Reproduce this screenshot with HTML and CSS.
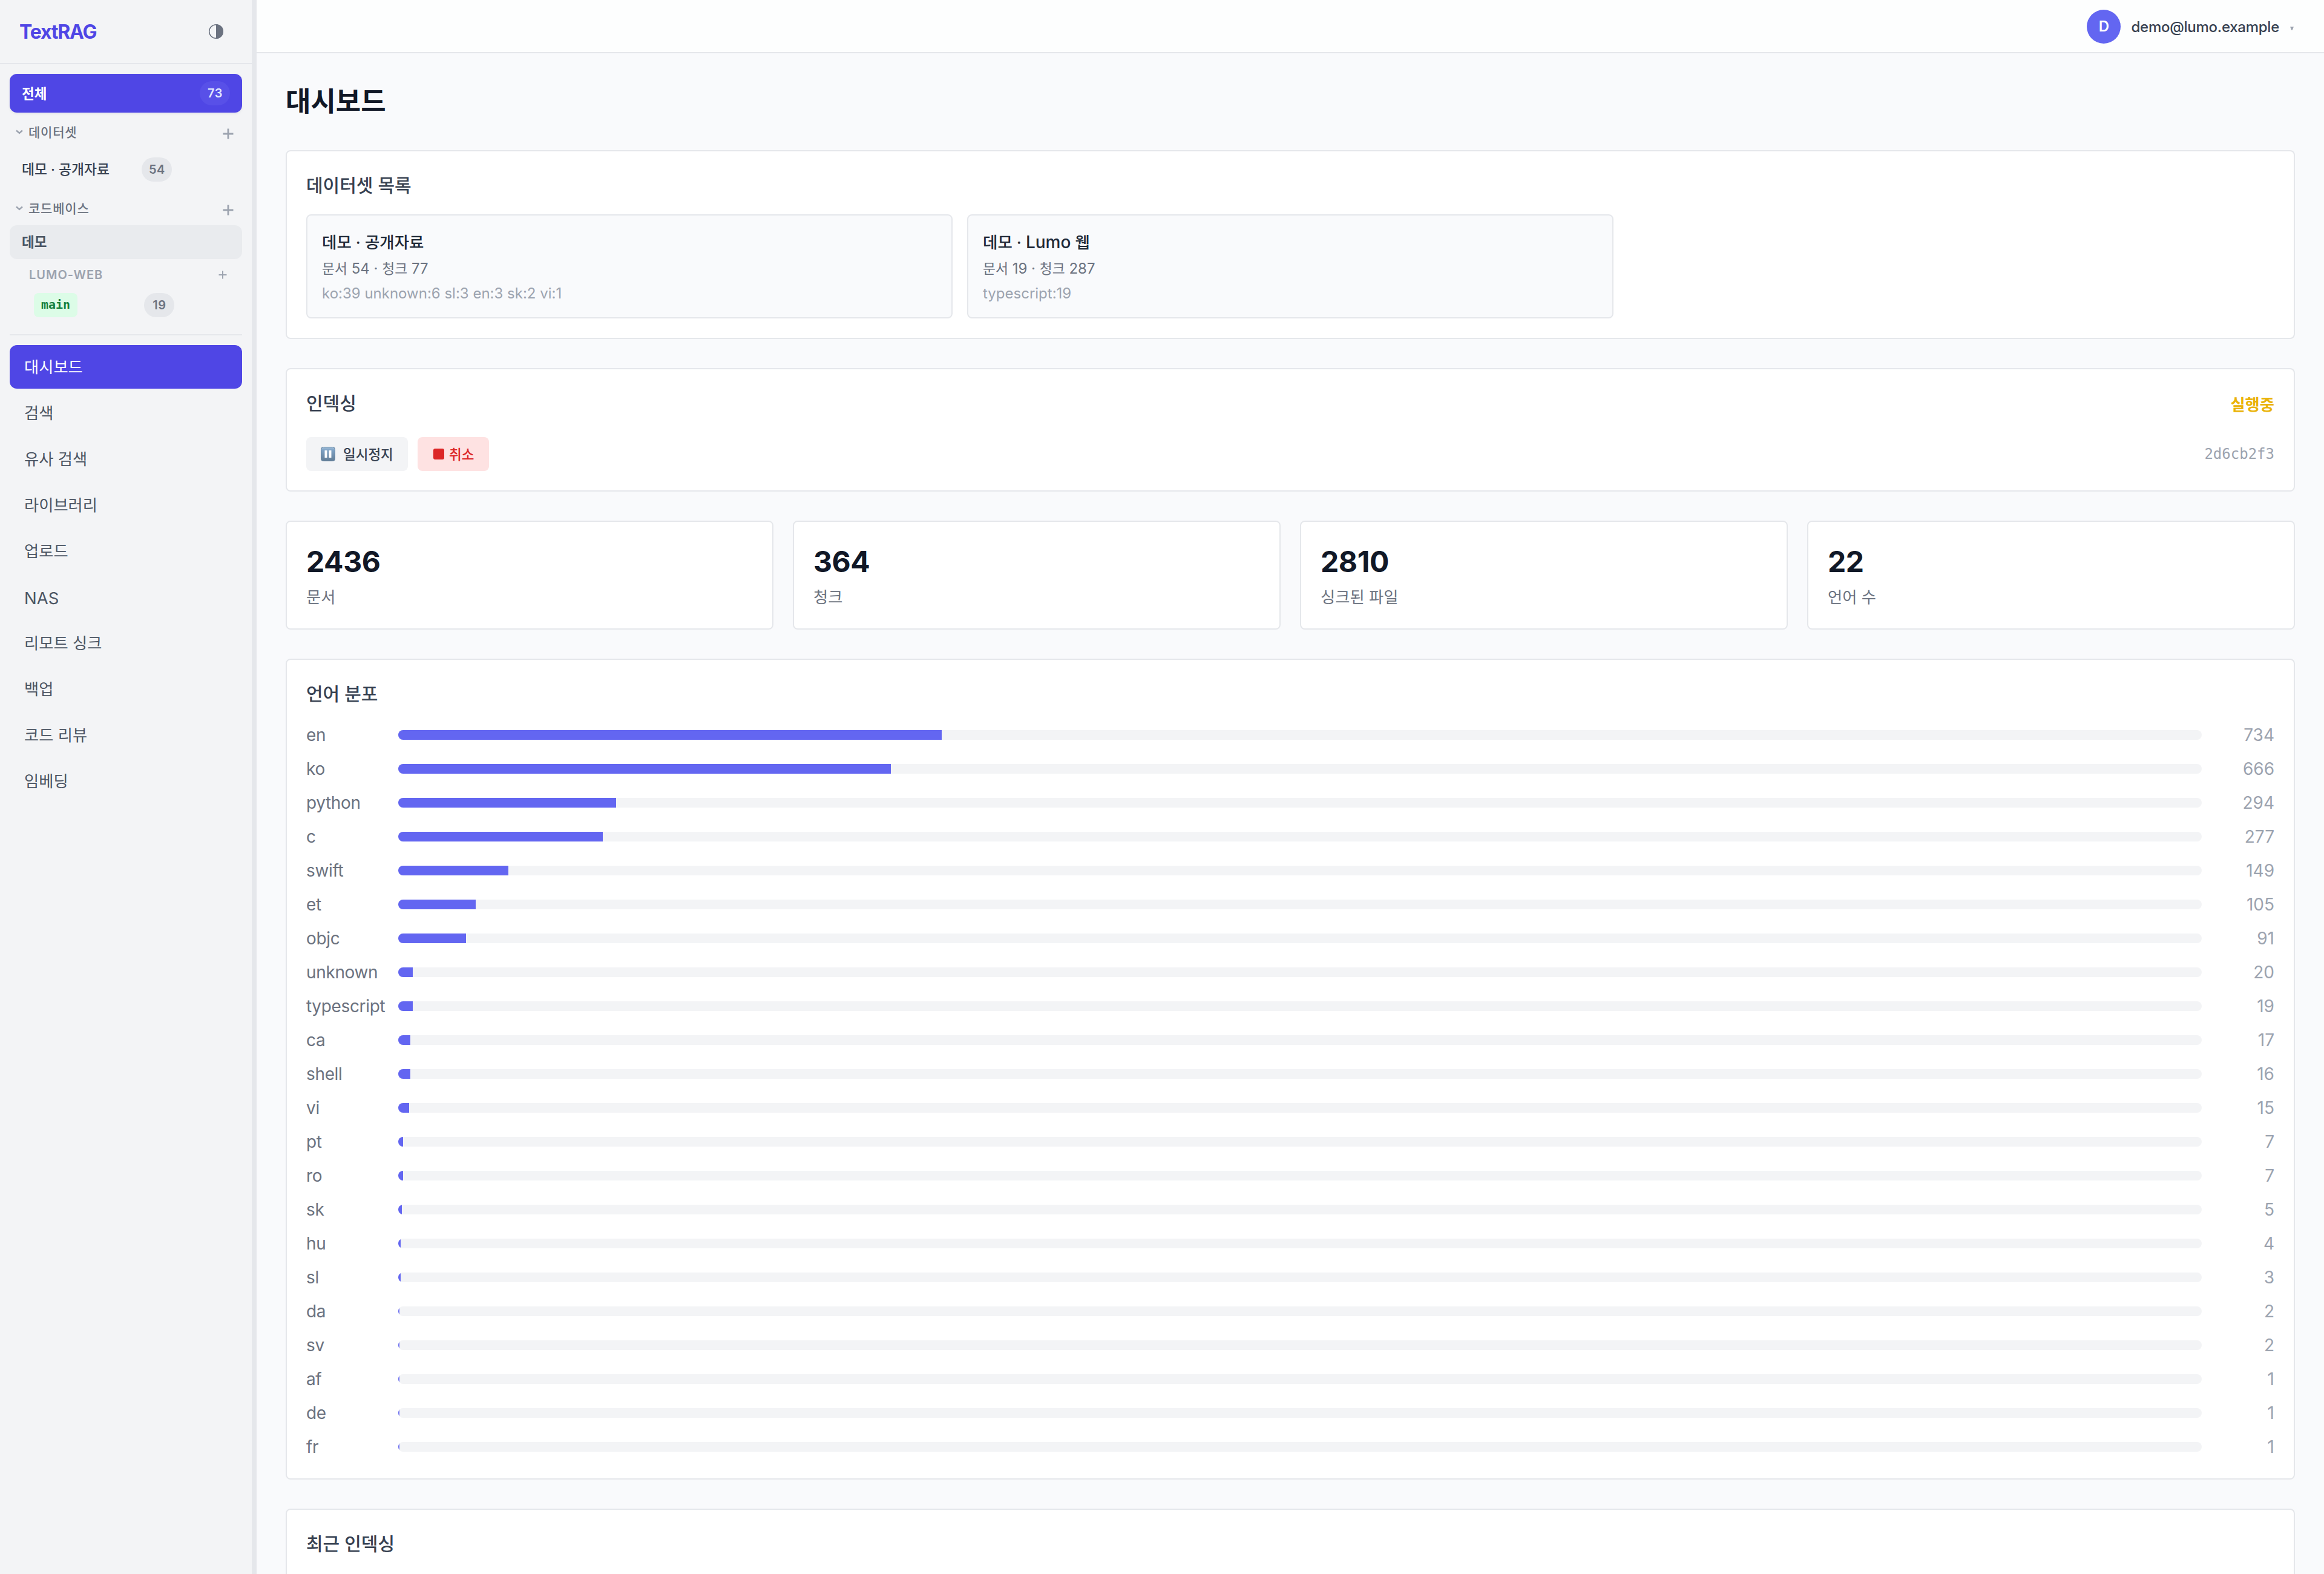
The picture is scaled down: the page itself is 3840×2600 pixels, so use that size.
FILE: index.html
```html
<!DOCTYPE html>
<html lang="ko">
<head>
    <meta charset="UTF-8">
    <meta name="viewport" content="width=device-width, initial-scale=1.0">
    <title>TextRAG</title>
    <link rel="stylesheet" href="styles.css">
</head>
<body>
    <aside class="sidebar">
        <div class="sidebar-header">
            <span class="logo">TextRAG</span>
            <svg class="theme-icon" viewBox="0 0 26 26">
                <circle cx="13" cy="13" r="11.3" fill="none" stroke="currentColor" stroke-width="1.5"/>
                <path d="M13 1a12 12 0 0 1 0 24z" fill="currentColor"/>
            </svg>
        </div>
        <div class="sidebar-body">
            <div class="all-item"><span>전체</span><span class="badge">73</span></div>

            <div class="group-header">
                <svg class="chevron" viewBox="0 0 12 8"><path d="M1 1.5l5 4.5 5-4.5"/></svg>
                <span>데이터셋</span>
                <svg class="plus" viewBox="0 0 18 18"><path d="M9 .5v17M.5 9h17"/></svg>
            </div>
            <div class="dataset-item"><span class="dataset-name">데모 · 공개자료</span><span class="badge">54</span></div>

            <div class="group-header">
                <svg class="chevron" viewBox="0 0 12 8"><path d="M1 1.5l5 4.5 5-4.5"/></svg>
                <span>코드베이스</span>
                <svg class="plus" viewBox="0 0 18 18"><path d="M9 .5v17M.5 9h17"/></svg>
            </div>
            <div class="project-item">데모</div>
            <div class="repo-header">
                <span>LUMO-WEB</span>
                <svg class="plus-small" viewBox="0 0 14 14"><path d="M7 .5v13M.5 7h13"/></svg>
            </div>
            <div class="branch-item"><span class="branch">main</span><span class="badge">19</span></div>

            <nav class="nav">
                <a class="nav-item active">대시보드</a>
                <a class="nav-item">검색</a>
                <a class="nav-item">유사 검색</a>
                <a class="nav-item">라이브러리</a>
                <a class="nav-item">업로드</a>
                <a class="nav-item latin">NAS</a>
                <a class="nav-item">리모트 싱크</a>
                <a class="nav-item">백업</a>
                <a class="nav-item">코드 리뷰</a>
                <a class="nav-item">임베딩</a>
            </nav>
        </div>
    </aside>

    <div class="main">
        <header class="topbar">
            <span class="avatar">D</span>
            <span class="email">demo@lumo.example</span>
            <svg class="caret" viewBox="0 0 6 6"><path d="M0 0h6L3.6 6H2.4z"/></svg>
        </header>

        <main class="content">
            <h1>대시보드</h1>

            <section class="card">
                <h2>데이터셋 목록</h2>
                <div class="dataset-grid">
                    <div class="dataset-card">
                        <div class="ds-name">데모 · 공개자료</div>
                        <div class="ds-meta"><span class="ko">문서</span> 54 · <span class="ko">청크</span> 77</div>
                        <div class="ds-langs">ko:39 unknown:6 sl:3 en:3 sk:2 vi:1</div>
                    </div>
                    <div class="dataset-card">
                        <div class="ds-name">데모 · <span class="latin">Lumo</span> 웹</div>
                        <div class="ds-meta"><span class="ko">문서</span> 19 · <span class="ko">청크</span> 287</div>
                        <div class="ds-langs">typescript:19</div>
                    </div>
                </div>
            </section>

            <section class="card">
                <div class="index-head"><h2>인덱싱</h2><span class="status">실행중</span></div>
                <div class="index-actions">
                    <button class="btn btn-pause">
                        <svg class="pause-icon" viewBox="0 0 24 24">
                            <defs>
                                <linearGradient id="pauseFill" x1="0" y1="0" x2="0" y2="1">
                                    <stop offset="0" stop-color="#a9c4dc"/>
                                    <stop offset=".2" stop-color="#7fa3c6"/>
                                    <stop offset="1" stop-color="#627d96"/>
                                </linearGradient>
                            </defs>
                            <rect x=".5" y=".5" width="23" height="23" rx="4" fill="url(#pauseFill)" stroke="#5f7f9c"/>
                            <path d="M6.5 6h4v12h-4zM13.5 6h4v12h-4z" fill="#fff"/>
                        </svg>
                        <span>일시정지</span>
                    </button>
                    <button class="btn btn-cancel"><i class="stop-icon"></i><span>취소</span></button>
                    <span class="job-id">2d6cb2f3</span>
                </div>
            </section>

            <div class="stats">
                <div class="card"><div class="stat-value">2436</div><div class="stat-label">문서</div></div>
                <div class="card"><div class="stat-value">364</div><div class="stat-label">청크</div></div>
                <div class="card"><div class="stat-value">2810</div><div class="stat-label">싱크된 파일</div></div>
                <div class="card"><div class="stat-value">22</div><div class="stat-label">언어 수</div></div>
            </div>

            <section class="card">
                <h2>언어 분포</h2>
                <div class="lang-list">
                    <div class="lang-row"><span>en</span><div class="bar"><div class="fill" style="width:898px"></div></div><span class="count">734</span></div>
                    <div class="lang-row"><span>ko</span><div class="bar"><div class="fill" style="width:814px"></div></div><span class="count">666</span></div>
                    <div class="lang-row"><span>python</span><div class="bar"><div class="fill" style="width:360px"></div></div><span class="count">294</span></div>
                    <div class="lang-row"><span>c</span><div class="bar"><div class="fill" style="width:338px"></div></div><span class="count">277</span></div>
                    <div class="lang-row"><span>swift</span><div class="bar"><div class="fill" style="width:182px"></div></div><span class="count">149</span></div>
                    <div class="lang-row"><span>et</span><div class="bar"><div class="fill" style="width:128px"></div></div><span class="count">105</span></div>
                    <div class="lang-row"><span>objc</span><div class="bar"><div class="fill" style="width:112px"></div></div><span class="count">91</span></div>
                    <div class="lang-row"><span>unknown</span><div class="bar"><div class="fill" style="width:24px"></div></div><span class="count">20</span></div>
                    <div class="lang-row"><span>typescript</span><div class="bar"><div class="fill" style="width:24px"></div></div><span class="count">19</span></div>
                    <div class="lang-row"><span>ca</span><div class="bar"><div class="fill" style="width:20px"></div></div><span class="count">17</span></div>
                    <div class="lang-row"><span>shell</span><div class="bar"><div class="fill" style="width:20px"></div></div><span class="count">16</span></div>
                    <div class="lang-row"><span>vi</span><div class="bar"><div class="fill" style="width:18px"></div></div><span class="count">15</span></div>
                    <div class="lang-row"><span>pt</span><div class="bar"><div class="fill" style="width:8px"></div></div><span class="count">7</span></div>
                    <div class="lang-row"><span>ro</span><div class="bar"><div class="fill" style="width:8px"></div></div><span class="count">7</span></div>
                    <div class="lang-row"><span>sk</span><div class="bar"><div class="fill" style="width:6px"></div></div><span class="count">5</span></div>
                    <div class="lang-row"><span>hu</span><div class="bar"><div class="fill" style="width:4px"></div></div><span class="count">4</span></div>
                    <div class="lang-row"><span>sl</span><div class="bar"><div class="fill" style="width:4px"></div></div><span class="count">3</span></div>
                    <div class="lang-row"><span>da</span><div class="bar"><div class="fill" style="width:2px"></div></div><span class="count">2</span></div>
                    <div class="lang-row"><span>sv</span><div class="bar"><div class="fill" style="width:2px"></div></div><span class="count">2</span></div>
                    <div class="lang-row"><span>af</span><div class="bar"><div class="fill" style="width:2px"></div></div><span class="count">1</span></div>
                    <div class="lang-row"><span>de</span><div class="bar"><div class="fill" style="width:2px"></div></div><span class="count">1</span></div>
                    <div class="lang-row"><span>fr</span><div class="bar"><div class="fill" style="width:2px"></div></div><span class="count">1</span></div>
                </div>
            </section>

            <section class="card recent">
                <h2>최근 인덱싱</h2>
            </section>
        </main>
    </div>
</body>
</html>
```
FILE: styles.css
```css
* {
    box-sizing: border-box;
}

body {
    margin: 0;
    height: 2600px;
    display: flex;
    overflow: hidden;
    font-family: Inter, "Noto Sans CJK KR", sans-serif;
    font-size: 28px;
    color: #111827;
    background: #f9fafc;
}

h1, h2 {
    margin: 0;
}

/* 사이드바 */
.sidebar {
    width: 424px;
    flex-shrink: 0;
    background: #f3f4f6;
    border-right: 8px solid #e5e7eb;
}

.sidebar-header {
    height: 106px;
    padding: 0 46px 0 32px;
    display: flex;
    align-items: center;
    justify-content: space-between;
    border-bottom: 2px solid #e5e7eb;
}

.logo {
    font-size: 32px;
    font-weight: 700;
    letter-spacing: -1.2px;
    color: #4f46e5;
}

.theme-icon {
    width: 26px;
    height: 26px;
    color: #6b7280;
}

.sidebar-body {
    padding: 16px;
}

.badge {
    width: 50px;
    height: 40px;
    padding-left: 1px;
    border-radius: 20px;
    background: #e5e7eb;
    color: #6b7280;
    font-size: 20px;
    font-weight: 600;
    letter-spacing: 0.6px;
    line-height: 41px;
    text-align: center;
}

.all-item {
    height: 64px;
    padding: 0 20px;
    margin-bottom: 4px;
    display: flex;
    align-items: center;
    justify-content: space-between;
    border-radius: 12px;
    background: #4f46e5;
    color: #fff;
    font-size: 22.5px;
    font-weight: 700;
    box-shadow: 0 2px 4px rgba(0, 0, 0, 0.06);
}

.all-item span:first-child {
    padding-bottom: 3px;
}

.all-item .badge {
    background: #5850e8;
    color: #e0e7ff;
}

.group-header {
    height: 56px;
    padding: 0 14px 0 10px;
    display: flex;
    align-items: center;
    color: #6b7280;
    font-size: 21px;
    font-weight: 500;
    letter-spacing: 0.8px;
}

.group-header span {
    padding-bottom: 3px;
}

.chevron {
    width: 12px;
    height: 8px;
    margin-right: 9px;
    fill: none;
    stroke: #9ca3af;
    stroke-width: 2.4;
}

.plus {
    width: 18px;
    height: 18px;
    margin: 5px 0 0 auto;
    stroke: #9ca3af;
    stroke-width: 2.8;
}

.dataset-item {
    height: 56px;
    margin: 6px 0 8px;
    padding-left: 20px;
    display: flex;
    align-items: center;
    color: #374151;
    font-size: 22.8px;
    font-weight: 500;
}

.dataset-name {
    width: 198px;
    padding-bottom: 3px;
}

.project-item {
    height: 56px;
    padding: 0 20px;
    border-radius: 12px;
    background: #e9ebee;
    color: #4b5563;
    font-size: 22.5px;
    font-weight: 600;
    line-height: 55px;
}

.repo-header {
    height: 50px;
    padding: 1px 25px 0 32px;
    display: flex;
    align-items: center;
    justify-content: space-between;
    color: #9ca3af;
    font-size: 20px;
    font-weight: 600;
    letter-spacing: 1px;
}

.plus-small {
    width: 14px;
    height: 14px;
    stroke: #9ca3af;
    stroke-width: 2;
}

.branch-item {
    height: 52px;
    padding-left: 40px;
    display: flex;
    align-items: center;
}

.branch {
    width: 72px;
    height: 40px;
    margin-right: 110px;
    border-radius: 8px;
    background: #dcfce7;
    color: #15803d;
    font-family: "DejaVu Sans Mono", monospace;
    font-size: 20px;
    font-weight: 700;
    line-height: 38px;
    text-align: center;
}

/* 메뉴 */
.nav {
    margin-top: 22px;
    padding-top: 16px;
    border-top: 2px solid #e5e7eb;
    display: flex;
    flex-direction: column;
    gap: 4px;
}

.nav-item {
    height: 72px;
    padding: 0 24px;
    border-radius: 12px;
    color: #4b5563;
    font-size: 26.3px;
    font-weight: 400;
    line-height: 73px;
}

.nav-item.latin {
    font-size: 27.5px;
    line-height: 76px;
}

.nav-item.active {
    background: #4f46e5;
    color: #fff;
}

/* 상단바 */
.main {
    flex: 1;
    min-width: 0;
    height: 2600px;
    overflow: hidden;
}

.topbar {
    height: 88px;
    padding: 2px 50px 0 0;
    display: flex;
    align-items: center;
    justify-content: flex-end;
    background: #fdfefe;
    border-bottom: 2px solid #e5e7eb;
}

.avatar {
    width: 56px;
    height: 56px;
    border-radius: 50%;
    background: #6366f1;
    color: #fff;
    font-size: 24px;
    font-weight: 600;
    line-height: 55px;
    text-align: center;
}

.email {
    margin: 0 18px 0 17px;
    color: #374151;
    font-size: 24px;
    font-weight: 450;
    letter-spacing: -0.25px;
}

.caret {
    width: 6px;
    height: 6px;
    margin-top: 6px;
    fill: #9ca3af;
}

/* 본문 */
.content {
    padding: 48px;
    display: flex;
    flex-direction: column;
    gap: 48px;
}

h1 {
    font-size: 45px;
    font-weight: 600;
    line-height: 64px;
}

.card {
    padding: 32px;
    background: #fff;
    border: 2px solid #e5e7eb;
    border-radius: 8px;
}

h2 {
    color: #374151;
    font-size: 30px;
    font-weight: 500;
    line-height: 48px;
}

.dataset-grid {
    margin-top: 24px;
    display: grid;
    grid-template-columns: repeat(3, 1fr);
    gap: 24px;
}

.dataset-card {
    padding: 24px;
    background: #f9fafc;
    border: 2px solid #e5e7eb;
    border-radius: 8px;
}

.ds-name {
    height: 40px;
    color: #1f2937;
    font-size: 26.5px;
    font-weight: 500;
    line-height: 41px;
}

.ds-name .latin {
    font-size: 28px;
}

.ds-meta,
.ds-langs {
    margin-top: 8px;
    height: 32px;
    color: #6b7280;
    font-size: 24px;
    line-height: 32px;
}

.ds-meta .ko {
    font-size: 22.8px;
}

.ds-langs {
    color: #9ca3af;
    line-height: 33px;
}

/* 인덱싱 */
.index-head {
    display: flex;
    align-items: center;
    justify-content: space-between;
}

.status {
    color: #eab308;
    font-size: 26.3px;
    font-weight: 700;
}

.index-actions {
    margin-top: 32px;
    display: flex;
    align-items: center;
    gap: 16px;
}

.btn {
    height: 56px;
    padding: 0 24px;
    display: flex;
    align-items: center;
    border: none;
    border-radius: 8px;
    font-family: inherit;
    font-size: 22.5px;
    font-weight: 500;
}

.btn span {
    padding-bottom: 3px;
}

.btn-pause {
    width: 168px;
    background: #f3f4f6;
    color: #374151;
}

.pause-icon {
    width: 24px;
    height: 24px;
    margin-right: 13px;
    flex-shrink: 0;
}

.btn-cancel {
    width: 118px;
    padding-left: 26px;
    background: #fee2e2;
    color: #dc2626;
}

.stop-icon {
    width: 18px;
    height: 18px;
    margin-right: 8px;
    border-radius: 3px;
    background: #dc2626;
}

.job-id {
    margin-left: auto;
    color: #9ca3af;
    font-family: "DejaVu Sans Mono", monospace;
    font-size: 24px;
}

/* 통계 */
.stats {
    display: grid;
    grid-template-columns: repeat(4, 1fr);
    gap: 32px;
}

.stat-value {
    height: 64px;
    font-size: 48px;
    font-weight: 700;
    line-height: 67px;
    letter-spacing: -0.4px;
}

.stat-label {
    margin-top: 8px;
    height: 40px;
    color: #6b7280;
    font-size: 26.3px;
    line-height: 42px;
}

/* 언어 분포 */
.lang-list {
    margin-top: 24px;
    display: flex;
    flex-direction: column;
    gap: 16px;
}

.lang-row {
    height: 40px;
    display: grid;
    grid-template-columns: 128px 1fr 96px;
    gap: 24px;
    align-items: center;
    color: #6b7280;
    line-height: 40px;
    letter-spacing: -0.35px;
}

.bar {
    height: 16px;
    border-radius: 8px;
    background: #f3f4f6;
    overflow: hidden;
}

.fill {
    height: 100%;
    background: #6366f1;
}

.count {
    color: #9ca3af;
    letter-spacing: 0;
    text-align: right;
}

.recent {
    height: 108px;
    border-bottom: none;
    border-radius: 8px 8px 0 0;
}
```
